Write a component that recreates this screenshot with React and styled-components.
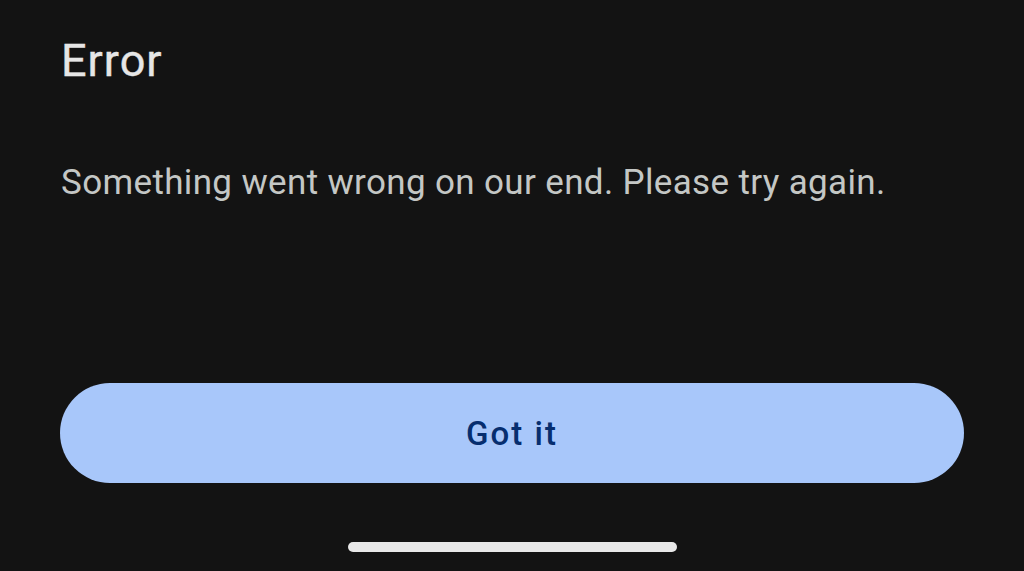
import React from "react";
import styled, { createGlobalStyle } from "styled-components";

const Global = createGlobalStyle`
  html, body { margin: 0; padding: 0; background: #131313; }
  body { font-family: Roboto, "Open Sans", sans-serif; }
`;

const Screen = styled.div`
  height: 571px;
  box-sizing: border-box;
  display: flex;
  flex-direction: column;
  padding: 0 60px 0 60px;
  background: #131313;
`;

const Title = styled.h1`
  margin: 35px 0 0 1px;
  font-family: Roboto, sans-serif;
  font-weight: 400;
  font-size: 45px;
  line-height: 52px;
  color: #e6e6e6;
  letter-spacing: 1px;
  -webkit-text-stroke: 0.4px #e6e6e6;
`;

const Message = styled.p`
  margin: 74px 0 0 1px;
  font-family: Roboto, sans-serif;
  font-weight: 400;
  font-size: 35px;
  line-height: 44px;
  color: #c4c7c5;
  letter-spacing: 0.35px;
`;

const Spacer = styled.div`
  flex: 1;
`;

const Button = styled.button`
  height: 100px;
  width: 100%;
  border: none;
  border-radius: 50px;
  background: #a8c7fa;
  color: #062e6f;
  font-family: Roboto, sans-serif;
  font-weight: 500;
  font-size: 33px;
  letter-spacing: 2px;
  cursor: pointer;
  display: flex;
  align-items: center;
  justify-content: center;
`;

const HomeArea = styled.div`
  height: 88px;
  display: flex;
  align-items: flex-start;
  justify-content: center;
  padding-top: 59px;
  box-sizing: border-box;
`;

const HomeBar = styled.div`
  width: 329px;
  height: 10px;
  border-radius: 5px;
  background: #e8e8e8;
`;

export default function App() {
  return (
    <>
      <Global />
      <Screen>
        <Title>Error</Title>
        <Message>Something went wrong on our end. Please try again.</Message>
        <Spacer />
        <Button>Got it</Button>
        <HomeArea>
          <HomeBar />
        </HomeArea>
      </Screen>
    </>
  );
}
